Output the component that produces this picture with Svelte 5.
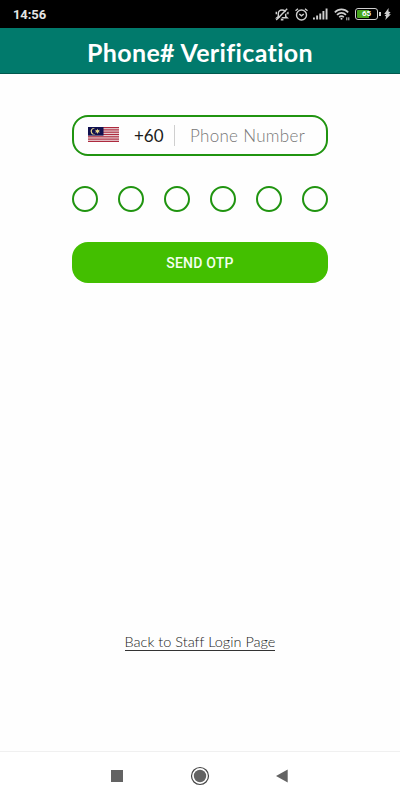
<script>
  let dialCode = '+60';
  let phone = '';
  let otp = ['', '', '', '', '', ''];
  const stripes = [0, 2, 4, 6, 8, 10, 12];
  const signalBars = [2, 4, 6, 8.5, 11];
</script>

<div class="screen">
  <div class="status">
    <span class="clock">14:56</span>
    <div class="status-icons">
      <svg class="bell" width="14" height="13" viewBox="0 0 14 13" fill="none" stroke="#cfcfcf" stroke-width="1.4">
        <path d="M3.300 8.500V5.500C3.300 3.300 4.800 2 7 2s3.700 1.300 3.700 3.500v3l1.500 1.300H1.800z" />
        <path d="M5.800 11.700h2.600M1.300 3.800v2.400M12.900 3.800v2.400" />
        <path d="M13.300 2 2.300 13" stroke="#000" stroke-width="1.5" />
        <path d="M12.200.8 1.200 12" />
      </svg>
      <svg class="alarm" width="13" height="13" viewBox="0 0 13 13" fill="none" stroke="#cfcfcf" stroke-width="1.4">
        <circle cx="6.5" cy="7" r="5" />
        <path d="M.5 2.8 3 .8M12.5 2.8 10 .8M4.3 6l2.2 1.9L8.8 6" />
      </svg>
      <svg class="signal" width="15" height="12" viewBox="0 0 15 12" fill="#cfcfcf">
        {#each signalBars as h, i}
          <rect x={i * 3.15} y={11.5 - h} width="1.9" height={h} />
        {/each}
      </svg>
      <svg class="wifi" width="16" height="13" viewBox="0 0 16 13" fill="none" stroke="#cfcfcf" stroke-width="1.6">
        <path d="M.8 4.4c3.8-4 9.6-4 13.4 0M3 6.9c2.6-2.7 6.4-2.7 9 0M5.2 9.2c1.4-1.4 3.2-1.4 4.6 0" />
        <circle cx="7.5" cy="10.8" r="1" fill="#cfcfcf" stroke="none" />
        <path d="M12.8 9.3v3M14.8 9.3v3" stroke-width="1" />
      </svg>
      <div class="battery"><span>65</span></div>
      <svg class="bolt" width="7" height="12" viewBox="0 0 7 12" fill="#cfcfcf">
        <path d="M4.600 0 .2 6h2.200L.6 7.700l1.500.8L1.300 12 6.900 6.200H4.700L6.600 4.200 4.400 3.600z" />
      </svg>
    </div>
  </div>

  <header><h1>Phone# Verification</h1></header>

  <main>
    <div class="phone-box">
      <svg class="flag" width="31" height="15" viewBox="0 0 31 15">
        <rect width="31" height="15" fill="#ead9dc" />
        {#each stripes as s}
          <rect y={s * 1.154} width="31" height="1.154" fill="#ad2a3e" />
        {/each}
        <rect width="15.5" height="8.6" fill="#10104f" />
        <path d="M7.4 1.6A3.2 3.2 0 1 0 7.4 7A2.8 2.8 0 1 1 7.4 1.600z" fill="#e6d489" />
        <path d="M9.4 1.6l.7 1.600 1.700-.5-.9 1.500 1 1.300-1.700-.2-.8 1.700-.7-1.700-1.700.2 1-1.300-.9-1.500 1.700.5z" fill="#e6d489" />
      </svg>
      <span class="code">{dialCode}</span>
      <input type="tel" placeholder="Phone Number" bind:value={phone} />
    </div>

    <div class="otp">
      {#each otp as digit, i}
        <input class="digit" maxlength="1" aria-label="Digit {i + 1}" bind:value={otp[i]} />
      {/each}
    </div>

    <button>SEND OTP</button>

    <a href="#login">Back to Staff Login Page</a>
  </main>

  <nav>
    <svg width="12" height="12"><rect width="12" height="12" fill="#636363" /></svg>
    <svg width="20" height="20" fill="none">
      <circle cx="10" cy="10" r="8.5" stroke="#454545" stroke-width="1.2" />
      <circle cx="10" cy="10" r="6.2" fill="#636363" />
    </svg>
    <svg width="12" height="14"><path d="M0 7 11.7.5v13z" fill="#636363" /></svg>
  </nav>
</div>

<style>
  :global(body) {
    margin: 0;
    background: #fff;
  }

  .screen {
    display: flex;
    flex-direction: column;
    width: 400px;
    height: 800px;
    overflow: hidden;
    background: #fefefe;
    font-family: Lato, sans-serif;
    font-variant-ligatures: none;
  }

  .status {
    display: flex;
    align-items: center;
    justify-content: space-between;
    box-sizing: border-box;
    height: 28px;
    padding: 0 9px 0 13px;
    background: #000;
  }

  .clock {
    color: #e4e4e4;
    font: bold 13px/29px Roboto, sans-serif;
    letter-spacing: -0.1px;
  }

  .status-icons {
    display: flex;
    align-items: center;
  }

  .alarm {
    margin-left: 6px;
  }

  .signal {
    margin-left: 5px;
  }

  .wifi {
    margin-left: 6px;
  }

  .battery {
    position: relative;
    box-sizing: border-box;
    width: 23px;
    height: 12px;
    margin-left: 5px;
    padding: 1px;
    border: 1.5px solid #cfcfcf;
    border-radius: 3px;
    background: linear-gradient(90deg, #47a51e 12px, #000 12px) content-box;
    color: #fff;
    font: bold 8px/8px Roboto, sans-serif;
    text-align: center;
  }

  .battery span {
    display: block;
  }

  /* battery terminal */
  .battery::after {
    content: '';
    position: absolute;
    right: -3.5px;
    top: 3px;
    width: 1.5px;
    height: 4px;
    background: #cfcfcf;
  }

  .bolt {
    margin-left: 6px;
  }

  header {
    box-sizing: border-box;
    height: 46px;
    border-bottom: 1px solid #00594e;
    background: #017a6c;
  }

  h1 {
    margin: 0;
    color: #fff;
    font-size: 25px;
    font-weight: bold;
    letter-spacing: 0.35px;
    line-height: 49px;
    text-align: center;
    white-space: nowrap;
  }

  main {
    display: flex;
    flex: 1;
    flex-direction: column;
    align-items: center;
    padding-top: 41px;
  }

  .phone-box {
    display: flex;
    align-items: center;
    box-sizing: border-box;
    width: 256px;
    height: 41px;
    padding-left: 14px;
    border: 2px solid #209410;
    border-radius: 16px;
  }

  .flag {
    flex: none;
    margin-bottom: 2px;
  }

  .code {
    width: 40px;
    margin-left: 15px;
    border-right: 1px solid #cfcfcf;
    color: #1c1c1c;
    font-size: 17px;
    line-height: 21px;
  }

  .phone-box input {
    width: 130px;
    margin-left: 15px;
    padding: 0;
    border: 0;
    outline: 0;
    background: none;
    font: 300 17px/21px Lato, sans-serif;
    letter-spacing: 0.3px;
  }

  .phone-box input::placeholder {
    color: #777;
    opacity: 1;
  }

  .otp {
    display: flex;
    justify-content: space-between;
    width: 257px;
    margin-top: 30px;
  }

  .digit {
    box-sizing: border-box;
    width: 26px;
    height: 26px;
    padding: 0;
    border: 2px solid #209410;
    border-radius: 50%;
    outline: 0;
    background: none;
    text-align: center;
  }

  button {
    width: 256px;
    height: 41px;
    margin-top: 30px;
    padding: 2px 0 0;
    border: 0;
    border-radius: 16px;
    background: #43bf00;
    color: #f4fff0;
    font: 500 14px/39px Roboto, sans-serif;
    letter-spacing: 0.2px;
  }

  a {
    margin-top: 351px;
    border-bottom: 1px solid #333;
    color: #222;
    font-size: 14.5px;
    font-weight: 300;
    line-height: 16px;
    text-decoration: none;
    white-space: nowrap;
  }

  nav {
    display: flex;
    align-items: center;
    justify-content: space-between;
    box-sizing: border-box;
    height: 49px;
    padding: 0 112px 0 111px;
    border-top: 1px solid #f0f0f0;
    background: #fff;
  }
</style>
